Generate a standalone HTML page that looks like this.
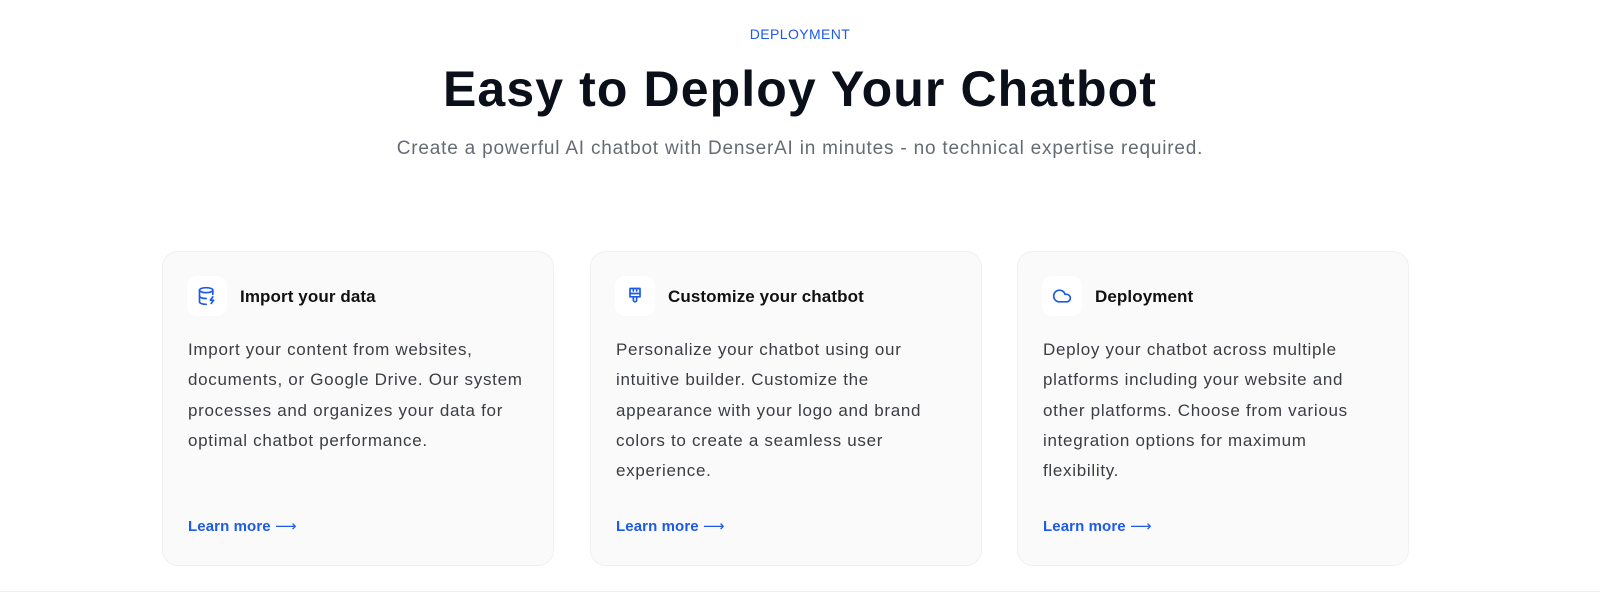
<!DOCTYPE html>
<html><head><meta charset="utf-8"><style>
*{margin:0;padding:0;box-sizing:border-box}
body{width:1600px;height:605px;background:#fff;font-family:"Liberation Sans",sans-serif;position:relative;overflow:hidden}
.lbl{position:absolute;top:26px;left:0;width:1600px;text-align:center;color:#1d5ae8;font-size:14px;letter-spacing:.4px}
h1{position:absolute;top:60px;left:0;width:1600px;text-align:center;font-size:50px;font-weight:700;color:#0b0f1a;letter-spacing:1.1px}
.sub{position:absolute;top:138px;left:0;width:1600px;text-align:center;font-size:19px;color:#666b73;letter-spacing:.8px}
.card{position:absolute;top:251px;width:392px;height:315px;background:#fafafa;border:1px solid #f0f0f0;border-radius:16px}
.ic{position:absolute;left:24px;top:24px;width:40px;height:40px;background:#fff;border-radius:10px;display:flex;align-items:center;justify-content:center}
.t{position:absolute;left:77px;top:35px;font-size:17px;font-weight:700;color:#111;letter-spacing:.1px}
.b{position:absolute;left:25px;top:83px;width:345px;font-size:17px;line-height:30.3px;color:#3a3d42;letter-spacing:.7px}
.lm{position:absolute;left:25px;top:265px;font-size:15px;font-weight:700;color:#1d5ae8;letter-spacing:.1px}
.lm span{font-family:"DejaVu Sans",sans-serif;font-weight:400;font-size:15px}
.line{position:absolute;left:0;top:591px;width:1600px;height:1px;background:#eee}
</style></head><body>
<div class="lbl">DEPLOYMENT</div>
<h1>Easy to Deploy Your Chatbot</h1>
<div class="sub">Create a powerful AI chatbot with DenserAI in minutes - no technical expertise required.</div>
<div class="card" style="left:162px"><div class="ic"><svg width="20" height="20" viewBox="0 0 24 24" fill="none" stroke="#1d5ae8" stroke-width="2" stroke-linecap="round" stroke-linejoin="round"><ellipse cx="11" cy="5" rx="8" ry="3"/><path d="M3 5v14c0 1.7 3.6 3 8 3"/><path d="M3 12c0 1.7 3.6 3 8 3"/><path d="M19 5v5"/><path d="M19 13l-3 4h4l-3 4"/></svg></div><div class="t">Import your data</div><div class="b">Import your content from websites, documents, or Google Drive. Our system processes and organizes your data for optimal chatbot performance.</div><div class="lm">Learn more <span>⟶</span></div></div>
<div class="card" style="left:590px"><div class="ic"><svg width="20" height="20" viewBox="0 0 24 24" fill="none" stroke="#1d5ae8" stroke-width="2" stroke-linecap="round" stroke-linejoin="round"><path d="M6 3h12v10H6z"/><path d="M6 9h12"/><path d="M10 3v3M14 3v3"/><path d="M10 13v4a2 2 0 0 0 4 0v-4"/></svg></div><div class="t">Customize your chatbot</div><div class="b">Personalize your chatbot using our intuitive builder. Customize the appearance with your logo and brand colors to create a seamless user experience.</div><div class="lm">Learn more <span>⟶</span></div></div>
<div class="card" style="left:1017px"><div class="ic"><svg width="20" height="20" viewBox="0 0 24 24" fill="none" stroke="#1d5ae8" stroke-width="2" stroke-linecap="round" stroke-linejoin="round"><path d="M17.5 19H9a7 7 0 1 1 6.7-9h1.8a4.5 4.5 0 1 1 0 9z"/></svg></div><div class="t">Deployment</div><div class="b">Deploy your chatbot across multiple platforms including your website and other platforms. Choose from various integration options for maximum flexibility.</div><div class="lm">Learn more <span>⟶</span></div></div>
<div class="line"></div>
</body></html>
